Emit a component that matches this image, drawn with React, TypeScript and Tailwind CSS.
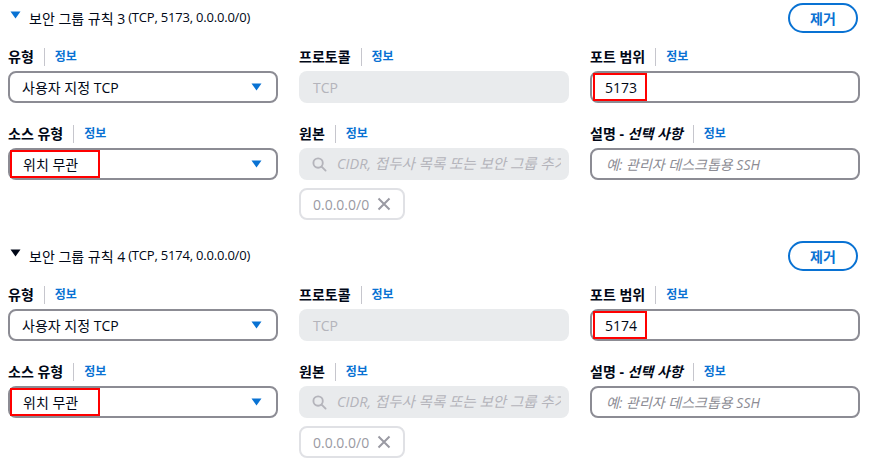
import React from "react";

const font = { fontFamily: '"Open Sans", "Noto Sans CJK KR", sans-serif' };

function Label({ children }: { children: React.ReactNode }) {
  return (
    <div className="flex h-[20px] items-center text-[14px] font-bold leading-[20px] text-[#000716]">
      <span>{children}</span>
      <span className="mx-[10px] h-[18px] w-px bg-[#c6c6cd]" />
      <span className="text-[12px] font-bold text-[#0972d3]">정보</span>
    </div>
  );
}

function Caret() {
  return (
    <svg width="11" height="8" viewBox="0 0 11 8" className="shrink-0">
      <path d="M0.5 0.5 L10.5 0.5 L5.5 7.5 Z" fill="#0972d3" />
    </svg>
  );
}

function Select({ value, highlight }: { value: string; highlight?: boolean }) {
  return (
    <div className="mt-[4px] flex h-[32px] items-center justify-between rounded-[8px] border-2 border-[#8c8c94] bg-white pr-[14px] text-[14px] text-[#000716]">
      {highlight ? (
        <span className="flex h-[28px] w-[90px] items-center border-2 border-[#ff0000] pl-[11px]">{value}</span>
      ) : (
        <span className="pl-[12px]">{value}</span>
      )}
      <Caret />
    </div>
  );
}

function Section({ n, port, blue }: { n: number; port: string; blue?: boolean }) {
  return (
    <div className="pt-[3px]">
      <div className="flex h-[30px] items-center justify-between pl-[10px] pr-[15px]">
        <div className="flex items-center">
          <svg width="11" height="8" viewBox="0 0 11 8" className="mr-[8px] -mt-[6px]">
            <path d="M0.5 0.5 L10.5 0.5 L5.5 7.5 Z" fill={blue ? "#0972d3" : "#000716"} />
          </svg>
          <span className="text-[14px] text-[#000716]">보안 그룹 규칙 {n}</span>
          <span className="ml-[3px] text-[13px] tracking-[-0.2px] text-[#000716]">(TCP, {port}, 0.0.0.0/0)</span>
        </div>
        <button className="flex h-[30px] w-[70px] items-center justify-center rounded-full border-2 border-[#0972d3] text-[14px] font-bold text-[#0972d3]">
          제거
        </button>
      </div>
      <div className="mt-[14px] grid grid-cols-[270px_270px_270px] gap-x-[21px] gap-y-[21px] pl-[8px]">
        <div>
          <Label>유형</Label>
          <Select value="사용자 지정 TCP" />
        </div>
        <div>
          <Label>프로토콜</Label>
          <div className="mt-[4px] flex h-[32px] items-center rounded-[8px] bg-[#e9ebed] pl-[14px] text-[14px] text-[#b4b4bb]">TCP</div>
        </div>
        <div>
          <Label>포트 범위</Label>
          <div className="mt-[4px] flex h-[32px] items-center rounded-[8px] border-2 border-[#8c8c94] bg-white text-[14px] text-[#000716]">
            <span className="ml-px flex h-[28px] w-[54px] items-center border-2 border-[#ff0000] pl-[10px]">{port}</span>
          </div>
        </div>
        <div>
          <Label>소스 유형</Label>
          <Select value="위치 무관" highlight />
        </div>
        <div>
          <Label>원본</Label>
          <div className="mt-[4px] flex h-[32px] items-center overflow-hidden whitespace-nowrap rounded-[8px] bg-[#e9ebed] pl-[13px] pr-[8px] text-[14.5px] italic text-[#b4b4bb]">
            <svg width="15" height="15" viewBox="0 0 16 16" className="mr-[10px] shrink-0">
              <circle cx="6.5" cy="6.5" r="5" fill="none" stroke="#b4b4bb" strokeWidth="2" />
              <path d="M10.2 10.2 L14.5 14.5" stroke="#b4b4bb" strokeWidth="2" strokeLinecap="round" />
            </svg>
            <span className="overflow-hidden">CIDR, 접두사 목록 또는 보안 그룹 추가</span>
          </div>
          <div className="mt-[8px] flex h-[32px] w-[106px] items-center rounded-[8px] border-2 border-[#e0e1e5] pl-[12px] text-[14px] text-[#9a9aa3]">
            <span>0.0.0.0/0</span>
            <svg width="14" height="14" viewBox="0 0 14 14" className="ml-[8px]">
              <path d="M1.5 1.5 L12.5 12.5 M12.5 1.5 L1.5 12.5" stroke="#9a9aa3" strokeWidth="2" />
            </svg>
          </div>
        </div>
        <div>
          <div className="flex h-[20px] items-center text-[14px] font-bold leading-[20px] text-[#000716]">
            <span>설명 - <i>선택 사항</i></span>
            <span className="mx-[10px] h-[18px] w-px bg-[#c6c6cd]" />
            <span className="text-[12px] font-bold text-[#0972d3]">정보</span>
          </div>
          <div className="mt-[4px] flex h-[32px] items-center rounded-[8px] border-2 border-[#8c8c94] bg-white pl-[14px] text-[14px] italic text-[#8c8c94]">
            예: 관리자 데스크톱용 SSH
          </div>
        </div>
      </div>
    </div>
  );
}

export default function App() {
  return (
    <div className="h-[468px] w-[873px] overflow-hidden bg-white" style={font}>
      <Section n={3} port="5173" blue />
      <div className="h-[18px]" />
      <Section n={4} port="5174" />
    </div>
  );
}
